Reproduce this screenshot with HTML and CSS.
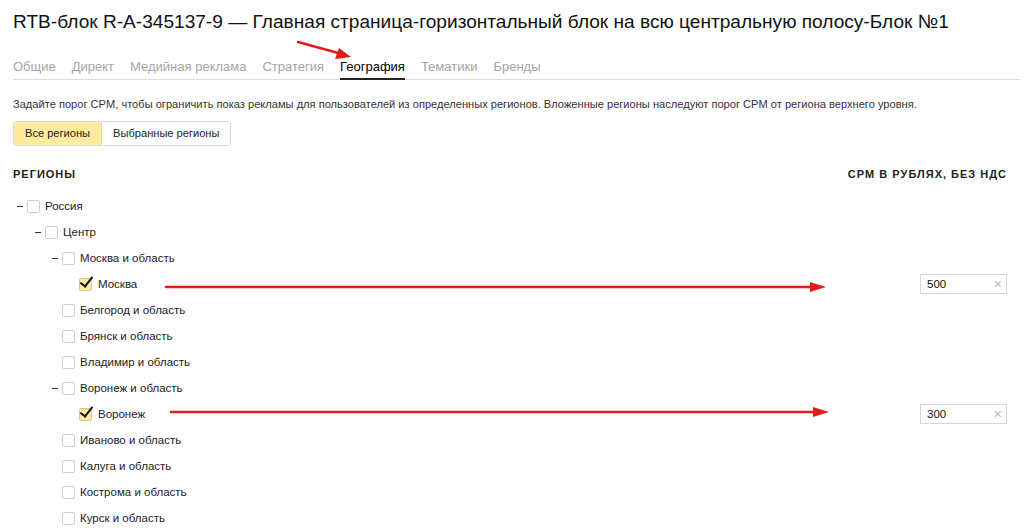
FILE: index.html
```html
<!DOCTYPE html>
<html lang="ru">
  <head>
    <meta charset="UTF-8" />
    <meta name="viewport" content="width=device-width, initial-scale=1.0" />
    <title>RTB-блок R-A-345137-9</title>
    <link rel="stylesheet" href="styles.css">
  </head>
  <body>
    <div class="page">
      <h1 class="title">RTB-блок R-A-345137-9 — Главная страница-горизонтальный блок на всю центральную полосу-Блок №1</h1>

      <nav class="tabs">
        <span class="tab">Общие</span>
        <span class="tab">Директ</span>
        <span class="tab">Медийная реклама</span>
        <span class="tab">Стратегия</span>
        <span class="tab active">География</span>
        <span class="tab">Тематики</span>
        <span class="tab">Бренды</span>
      </nav>

      <p class="hint">Задайте порог CPM, чтобы ограничить показ рекламы для пользователей из определенных регионов. Вложенные регионы наследуют порог CPM от региона верхнего уровня.</p>

      <div class="switch">
        <span class="switch-btn on">Все регионы</span>
        <span class="switch-btn">Выбранные регионы</span>
      </div>

      <div class="thead">
        <span>Регионы</span>
        <span>CPM в рублях, без НДС</span>
      </div>

      <ul class="tree">
        <li class="row lvl0"><span class="toggle"></span><span class="check"></span><span class="name">Россия</span></li>
        <li class="row lvl1"><span class="toggle"></span><span class="check"></span><span class="name">Центр</span></li>
        <li class="row lvl2"><span class="toggle"></span><span class="check"></span><span class="name">Москва и область</span></li>
        <li class="row lvl3">
          <span class="toggle none"></span><span class="check checked"></span><span class="name">Москва</span>
          <span class="cpm"><span class="cpm-value">500</span><span class="cpm-clear">×</span></span>
        </li>
        <li class="row lvl2"><span class="toggle none"></span><span class="check"></span><span class="name">Белгород и область</span></li>
        <li class="row lvl2"><span class="toggle none"></span><span class="check"></span><span class="name">Брянск и область</span></li>
        <li class="row lvl2"><span class="toggle none"></span><span class="check"></span><span class="name">Владимир и область</span></li>
        <li class="row lvl2"><span class="toggle"></span><span class="check"></span><span class="name">Воронеж и область</span></li>
        <li class="row lvl3">
          <span class="toggle none"></span><span class="check checked"></span><span class="name">Воронеж</span>
          <span class="cpm"><span class="cpm-value">300</span><span class="cpm-clear">×</span></span>
        </li>
        <li class="row lvl2"><span class="toggle none"></span><span class="check"></span><span class="name">Иваново и область</span></li>
        <li class="row lvl2"><span class="toggle none"></span><span class="check"></span><span class="name">Калуга и область</span></li>
        <li class="row lvl2"><span class="toggle none"></span><span class="check"></span><span class="name">Кострома и область</span></li>
        <li class="row lvl2"><span class="toggle none"></span><span class="check"></span><span class="name">Курск и область</span></li>
      </ul>
    </div>

    <!-- red annotation arrows drawn over the screenshot -->
    <svg class="marks" width="1024" height="530" viewBox="0 0 1024 530">
      <g stroke="#e31b1b" stroke-width="2.5" fill="none" stroke-linecap="round">
        <line x1="298" y1="42" x2="342" y2="54" />
        <line x1="166" y1="287" x2="814" y2="287" />
        <line x1="171" y1="412" x2="817" y2="412" />
      </g>
      <g fill="#e31b1b">
        <polygon points="351,57 339,48 335,59" />
        <polygon points="826,287 810,282 810,292" />
        <polygon points="829,412 813,407 813,417" />
      </g>
    </svg>
  </body>
</html>
```

FILE: styles.css
```css
html,
body {
  margin: 0;
  padding: 0;
}

body {
  font-family: "Liberation Sans", Arial, sans-serif;
  color: #000;
  background: #fff;
  position: relative;
  height: 530px;
  overflow: hidden;
}

.page {
  padding: 10px 17px 0 13px;
}

.title {
  margin: 0;
  font-size: 19.1px;
  line-height: 24px;
  font-weight: normal;
  color: #111;
  white-space: nowrap;
}

.tabs {
  display: flex;
  margin-top: 25px;
  margin-right: -13px;
  border-bottom: 1px solid #dcdcdc;
}

.tab {
  font-size: 13px;
  line-height: 16px;
  color: #a5a5a5;
  padding-bottom: 3px;
  border-bottom: 2px solid transparent;
  margin-right: 16px;
  margin-bottom: -1px;
}

.tab.active {
  color: #000;
  border-bottom-color: #222;
}

.hint {
  margin: 17px 0 0;
  font-size: 11.1px;
  line-height: 14px;
  color: #333;
  white-space: nowrap;
}

.switch {
  display: inline-flex;
  margin-top: 10px;
  border: 1px solid #dcdcdc;
  border-radius: 3px;
  overflow: hidden;
}

.switch-btn {
  font-size: 11.1px;
  line-height: 23px;
  padding: 0 11px;
  color: #222;
  background: #fff;
}

.switch-btn.on {
  background: #ffeba0;
  border-right: 1px solid #e6d594;
}

.thead {
  display: flex;
  justify-content: space-between;
  margin-top: 21px;
  font-size: 11px;
  line-height: 14px;
  font-weight: bold;
  text-transform: uppercase;
  letter-spacing: 1px;
  color: #222;
}

.tree {
  list-style: none;
  margin: 12px 0 0;
  padding: 0;
}

.row {
  display: flex;
  align-items: center;
  height: 26px;
  font-size: 11.5px;
  color: #222;
}

.lvl0 { padding-left: 4px; }
.lvl1 { padding-left: 22px; }
.lvl2 { padding-left: 39px; }
.lvl3 { padding-left: 56px; }

.toggle {
  width: 7px;
  height: 1px;
  position: relative;
}

.toggle::before {
  content: "";
  position: absolute;
  left: 0;
  top: 0;
  width: 6px;
  height: 1px;
  background: #333;
}

.toggle.none::before {
  display: none;
}

.check {
  box-sizing: border-box;
  width: 13px;
  height: 13px;
  border: 1px solid #cfcfcf;
  border-radius: 2px;
  background: #fff;
  margin-left: 3px;
  position: relative;
}

.check.checked {
  background: #ffeba0;
  border-color: #d8c88c;
}

.check.checked::after {
  content: "";
  position: absolute;
  left: 3px;
  top: -5px;
  width: 5px;
  height: 11px;
  border: solid #111;
  border-width: 0 2px 2px 0;
  transform: rotate(38deg);
}

.name {
  margin-left: 5px;
}

.lvl3 .name {
  margin-left: 6px;
}

.cpm {
  margin-left: auto;
  box-sizing: border-box;
  width: 87px;
  height: 20px;
  border: 1px solid #d6d6d6;
  display: flex;
  align-items: center;
  justify-content: space-between;
  padding: 0 4px 0 6px;
  font-size: 11.5px;
  color: #111;
}

.cpm-clear {
  color: #b8b8b8;
  font-size: 14px;
  line-height: 1;
}

.marks {
  position: absolute;
  left: 0;
  top: 0;
  pointer-events: none;
}
```
